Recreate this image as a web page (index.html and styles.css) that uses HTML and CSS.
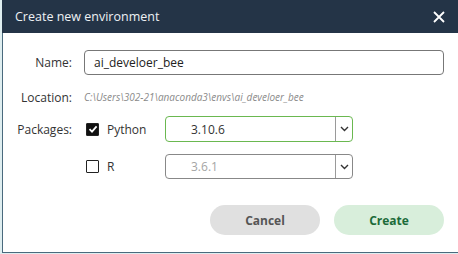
FILE: index.html
```html
<!DOCTYPE html>
<html lang="en">
<head>
    <meta charset="UTF-8">
    <meta name="viewport" content="width=device-width, initial-scale=1.0">
    <title>Create new environment</title>
    <link rel="stylesheet" href="styles.css">
</head>
<body>
    <div class="dialog">
        <div class="titlebar">
            <span class="title">Create new environment</span>
            <svg class="close" width="12" height="12" viewBox="0 0 12 12">
                <path d="M1 1 L11 11 M11 1 L1 11" stroke="#ffffff" stroke-width="1.8" fill="none"/>
            </svg>
        </div>
        <div class="content">
            <div class="row row-name">
                <label class="label" for="envname">Name:</label>
                <input type="text" id="envname" class="text-input" value="ai_develoer_bee">
            </div>
            <div class="row row-location">
                <span class="label">Location:</span>
                <span class="location">C:\Users\302-21\anaconda3\envs\ai_develoer_bee</span>
            </div>
            <div class="row row-python">
                <span class="label">Packages:</span>
                <span class="check checked">
                    <svg width="10" height="10" viewBox="0 0 10 10">
                        <path d="M1.5 5.2 L4 7.6 L8.6 2.4" stroke="#ffffff" stroke-width="1.8" fill="none"/>
                    </svg>
                </span>
                <span class="pkg">Python</span>
                <div class="select active">
                    <span class="select-value">3.10.6</span>
                    <span class="select-arrow">
                        <svg width="9" height="6" viewBox="0 0 9 6"><path d="M1 1 L4.5 4.5 L8 1" stroke="#333" stroke-width="1.4" fill="none"/></svg>
                    </span>
                </div>
            </div>
            <div class="row row-r">
                <span class="label"></span>
                <span class="check"></span>
                <span class="pkg">R</span>
                <div class="select disabled">
                    <span class="select-value">3.6.1</span>
                    <span class="select-arrow">
                        <svg width="9" height="6" viewBox="0 0 9 6"><path d="M1 1 L4.5 4.5 L8 1" stroke="#333" stroke-width="1.4" fill="none"/></svg>
                    </span>
                </div>
            </div>
            <div class="buttons">
                <button class="btn btn-cancel">Cancel</button>
                <button class="btn btn-create">Create</button>
            </div>
        </div>
    </div>
</body>
</html>
```

FILE: styles.css
```css
body {
    margin: 0;
    background: #dfeef0;
    font-family: "Open Sans", "Noto Sans", sans-serif;
    color: #222;
}
.dialog {
    margin-left: 2px;
    height: 252px;
    background: #ffffff;
    border-left: 1px solid #4a6a7d;
    border-bottom: 1px solid #4a6a7d;
}
.titlebar {
    height: 33px;
    margin-left: -1px;
    background: #243447;
    display: flex;
    align-items: center;
    justify-content: space-between;
    padding: 0 13px 0 13px;
}
.title {
    color: #eef1f4;
    font-size: 12.5px;
}
.close {
    display: block;
}
.content {
    padding-top: 17px;
}
.row {
    display: flex;
    align-items: center;
}
.label {
    width: 69px;
    text-align: right;
    font-size: 12px;
    color: #333;
    margin-right: 12px;
    flex-shrink: 0;
}
.row-name {
    height: 25px;
}
.text-input {
    width: 360px;
    height: 25px;
    box-sizing: border-box;
    border: 1px solid #777;
    border-radius: 4px;
    padding: 0 9px;
    font-family: inherit;
    font-size: 12px;
    color: #222;
    outline: none;
}
.row-location {
    height: 20px;
    margin-top: 12px;
}
.location {
    font-size: 10px;
    font-style: italic;
    color: #8a8a8a;
}
.row-python {
    height: 26px;
    margin-top: 9px;
}
.row-r {
    height: 25px;
    margin-top: 12px;
}
.check {
    width: 11px;
    height: 11px;
    border: 1px solid #222;
    border-radius: 1px;
    margin-left: 2px;
    display: flex;
    align-items: center;
    justify-content: center;
}
.check.checked {
    background: #111;
}
.pkg {
    width: 58px;
    margin-left: 8px;
    font-size: 12px;
    color: #333;
}
.select {
    width: 188px;
    height: 100%;
    box-sizing: border-box;
    border: 1px solid #888;
    border-radius: 4px;
    display: flex;
    font-size: 12px;
}
.select.active {
    border-color: #6ab850;
}
.select-value {
    flex: 1;
    display: flex;
    align-items: center;
    padding-left: 25px;
    color: #333;
}
.select.disabled .select-value {
    color: #a5a5a5;
}
.select-arrow {
    width: 16px;
    border-left: 1px solid #9a9a9a;
    display: flex;
    align-items: center;
    justify-content: center;
}
.buttons {
    display: flex;
    justify-content: flex-end;
    gap: 14px;
    margin-top: 26px;
    padding-right: 14px;
}
.btn {
    width: 110px;
    height: 30px;
    border: none;
    border-radius: 15px;
    font-family: inherit;
    font-size: 12px;
    font-weight: bold;
    cursor: pointer;
}
.btn-cancel {
    background: #e0e0e0;
    color: #555;
}
.btn-create {
    background: #d8eedb;
    color: #1c6b3a;
}
```
